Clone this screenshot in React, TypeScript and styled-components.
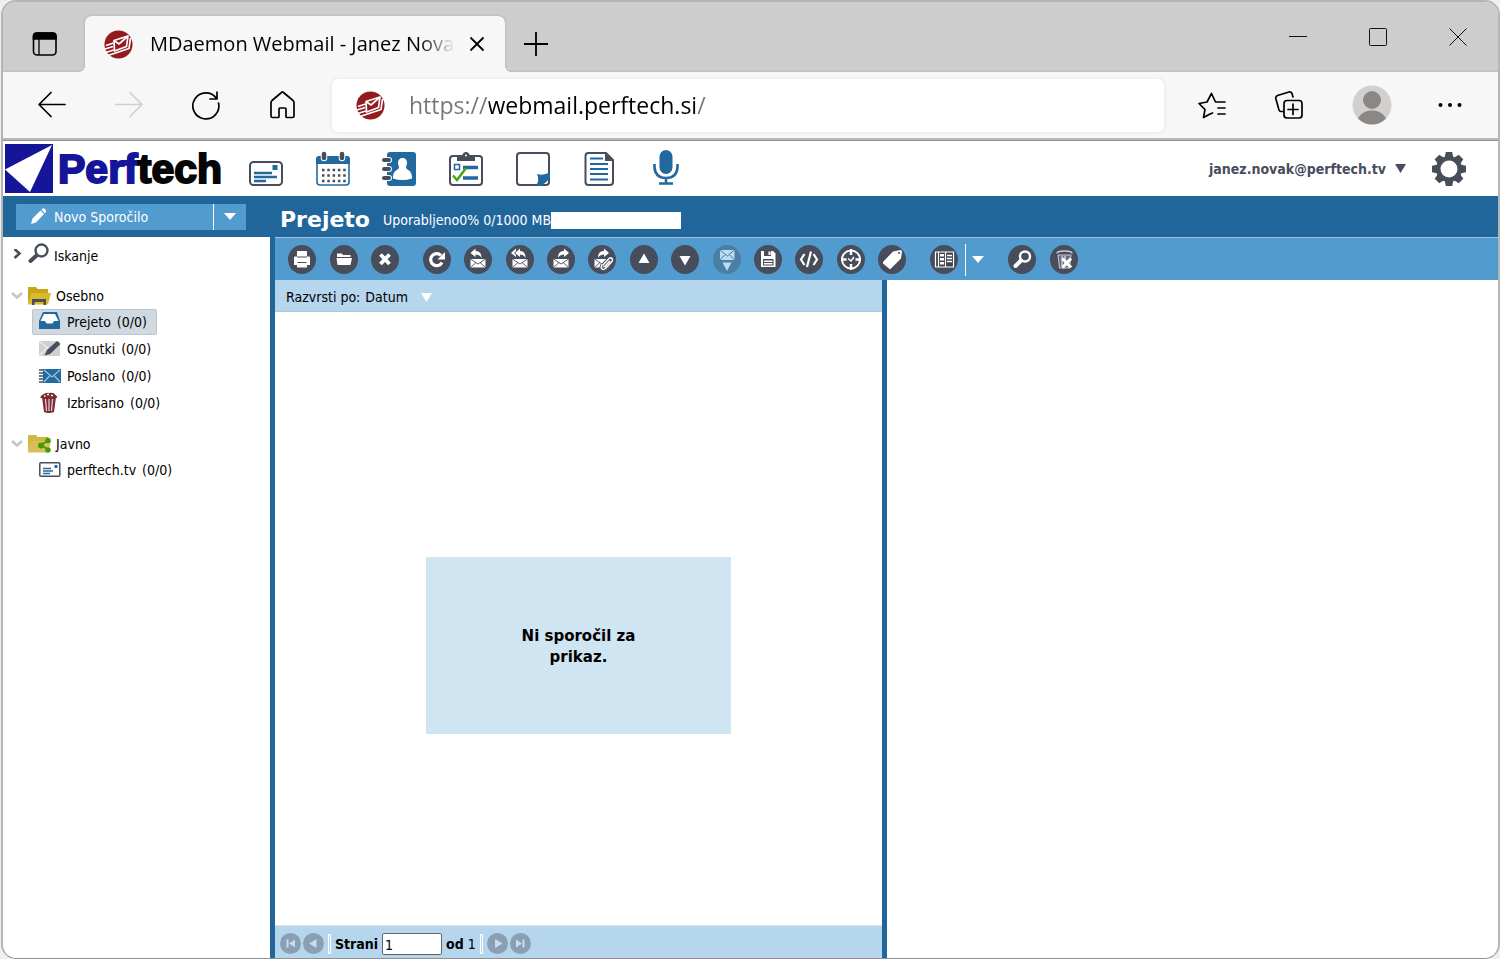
import React from 'react';
import styled, { createGlobalStyle } from 'styled-components';

const c = {
  band: '#21669b',
  bar: '#519bcf',
  pale: '#b6d6ed',
  empty: '#d0e5f2',
  slate: '#474d5b',
  chrome: '#cdcdcd',
  panel: '#f7f7f7',
  edge: '#b5b5b5',
};
const ui = `'DejaVu Sans Condensed', 'DejaVu Sans', sans-serif`;
const chromeFont = `'Open Sans', 'Noto Sans', sans-serif`;

const GlobalStyle = createGlobalStyle`
  *, *::before, *::after { box-sizing: border-box; }
  body { margin: 0; background: #efefef; }
  button, input { font: inherit; color: inherit; }
  button { border: 0; padding: 0; background: none; cursor: pointer; }
  a { color: inherit; text-decoration: none; }
  svg { display: block; flex: none; }
`;

const Window = styled.div`
  display: flex;
  flex-direction: column;
  min-height: 100vh;
  margin-left: 1px;
  border: 2px solid ${c.edge};
  border-bottom: 1px solid #909090;
  border-radius: 15px;
  overflow: hidden;
  background: #fff;
  font: 14px/18px ${ui};
  color: #000;
`;

/* Browser frame */
const TabStrip = styled.div`
  display: flex;
  height: 70px;
  background: ${c.chrome};
  padding: 14px 0 0 29px;
  align-items: stretch;
  box-shadow: inset 0 -2px 2px -1px #bbb;
`;
const PlainButton = styled.button`
  display: flex;
  align-items: center;
  justify-content: center;
  flex: none;
`;
const Tab = styled.div`
  position: relative;
  display: flex;
  align-items: center;
  width: 420px;
  margin: 0 19px 0 27px;
  padding: 0 20px 0 19px;
  background: ${c.panel};
  border-radius: 7px 7px 0 0;
  box-shadow: 0 0 3px #aaa;
  clip-path: inset(-4px -8px 0 -8px);
  &::before,
  &::after {
    content: '';
    position: absolute;
    bottom: 0;
    width: 6px;
    height: 6px;
  }
  &::before {
    left: -6px;
    background: radial-gradient(circle at 0 0, transparent 6px, ${c.panel} 6px);
  }
  &::after {
    right: -6px;
    background: radial-gradient(circle at 100% 0, transparent 6px, ${c.panel} 6px);
  }
`;
const TabTitle = styled.span`
  flex: 1;
  margin: 0 14px 0 17px;
  overflow: hidden;
  white-space: nowrap;
  font: 20px/28px ${chromeFont};
  mask-image: linear-gradient(to right, #000 calc(100% - 36px), transparent);
`;
const WindowButtons = styled.div`
  display: flex;
  gap: 60px;
  margin: 0 30px 14px auto;
`;
const NavBar = styled.div`
  display: flex;
  align-items: center;
  height: 68px;
  padding: 0 36px 0 34px;
  background: ${c.panel};
  border-bottom: 2px solid #b9b9b9;
  box-shadow: 0 1px 0 #909090;
  margin-bottom: 1px;
`;
const NavButtons = styled.div`
  display: flex;
  gap: 46px;
`;
const Address = styled.label`
  display: flex;
  align-items: center;
  flex: 1;
  height: 53px;
  margin: 0 34px 0 33px;
  padding: 0 24px;
  background: #fff;
  border-radius: 6px;
  box-shadow: 0 0 4px #e4e4e4;
`;
const AddressInput = styled.input`
  flex: 1;
  min-width: 0;
  margin-left: 24px;
  padding: 0;
  border: 0;
  outline: 0;
  font: 23px/32px ${chromeFont};
  color: transparent;
  background: linear-gradient(to right, #777 80px, #000 80px, #000 287px, #777 287px);
  background-clip: text;
  -webkit-background-clip: text;
`;
const NavRight = styled.div`
  display: flex;
  align-items: center;
  gap: 46px;
`;

/* Webmail header */
const Header = styled.header`
  display: flex;
  align-items: center;
  height: 55px;
  padding: 0 32px 0 2px;
`;
const Logo = styled.a`
  display: flex;
  align-items: center;
  gap: 5px;
  width: 244px;
  font: bold 41px/54px 'Liberation Sans', sans-serif;
  color: #15159a;
  -webkit-text-stroke: 2px currentColor;
`;
const LogoDark = styled.span`
  color: #050505;
`;
const AppNav = styled.nav`
  display: flex;
  justify-content: space-between;
  align-items: center;
  width: 434px;
`;
const Account = styled.button`
  display: flex;
  align-items: center;
  gap: 9px;
  margin: 0 26px 0 auto;
  font: bold 14px/18px ${ui};
  color: ${c.slate};
`;
const Band = styled.div`
  display: flex;
  align-items: center;
  height: 41px;
  background: ${c.band};
  color: #fff;
`;
const Compose = styled.div`
  display: flex;
  gap: 1px;
  width: 230px;
  height: 26px;
  margin: 0 34px 0 13px;
  border-radius: 3px;
  overflow: hidden;
  background: #fff;
`;
const ComposeButton = styled.button`
  display: flex;
  align-items: center;
  flex: 1;
  gap: 7px;
  padding-left: 14px;
  background: ${c.bar};
`;
const ComposeMore = styled.button`
  display: flex;
  align-items: center;
  justify-content: center;
  width: 32px;
  background: ${c.bar};
`;
const Title = styled.h1`
  margin: 6px 13px 0 0;
  font: bold 22px/28px 'DejaVu Sans', sans-serif;
`;
const Quota = styled.div`
  display: flex;
  align-items: center;
  padding-top: 7px;
`;
const QuotaBar = styled.div`
  width: 130px;
  height: 17px;
  background: #fff;
`;

/* Body */
const Body = styled.div`
  display: flex;
  flex: 1;
`;
const Sidebar = styled.nav`
  width: 267px;
  flex: none;
`;
const SearchLink = styled.a`
  display: flex;
  align-items: center;
  gap: 4px;
  height: 38px;
  padding-left: 9px;
  margin-bottom: 8px;
`;
const Group = styled.section`
  margin-bottom: 14px;
`;
const GroupHead = styled.button`
  display: flex;
  align-items: center;
  gap: 5px;
  height: 26px;
  padding-left: 8px;
`;
const Folders = styled.ul`
  list-style: none;
  margin: 0;
  padding: 0 0 0 29px;
`;
const Folder = styled.li`
  display: flex;
  height: 27px;
`;
const FolderLink = styled.a<{ $active?: boolean }>`
  display: flex;
  align-items: center;
  gap: 6px;
  height: 26px;
  padding: 0 9px 0 6px;
  border: 1px solid ${(p) => (p.$active ? '#bcc5cd' : 'transparent')};
  border-radius: 2px;
  background: ${(p) => (p.$active ? '#d1d9e0' : 'transparent')};
`;
const Main = styled.main`
  display: flex;
  flex-direction: column;
  flex: 1;
  min-width: 0;
  border-left: 5px solid ${c.band};
`;
const Toolbar = styled.div`
  display: flex;
  align-items: center;
  gap: 24px;
  height: 43px;
  padding: 1px 13px 0;
  border-top: 1px solid #a9bfd9;
  background: ${c.bar};
`;
const Tools = styled.div<{ $width?: number }>`
  display: flex;
  align-items: center;
  justify-content: space-between;
  width: ${(p) => (p.$width ? `${p.$width}px` : 'auto')};
`;
const ToolSeparator = styled.span`
  width: 1px;
  height: 32px;
  margin: 0 6px 0 7px;
  background: #fff;
`;
const Panes = styled.div`
  display: flex;
  flex: 1;
`;
const ListPane = styled.section`
  display: flex;
  flex-direction: column;
  width: 612px;
  border-right: 5px solid ${c.band};
`;
const Preview = styled.section`
  flex: 1;
`;
const SortBar = styled.div`
  display: flex;
  align-items: center;
  gap: 5px;
  height: 32px;
  padding: 3px 11px 0;
  border-bottom: 1px solid #b3c6dc;
  background: ${c.pale};
`;
const SortButton = styled.button`
  display: flex;
  align-items: center;
  gap: 13px;
`;
const ListBody = styled.div`
  display: flex;
  align-items: center;
  justify-content: center;
  flex: 1;
  padding-top: 54px;
`;
const EmptyBox = styled.p`
  display: flex;
  align-items: center;
  justify-content: center;
  width: 305px;
  height: 177px;
  margin: 0;
  padding: 2px 80px 0;
  text-align: center;
  background: ${c.empty};
  font: bold 15px/21px 'DejaVu Sans', sans-serif;
`;
const Pager = styled.div`
  display: flex;
  align-items: center;
  gap: 4px;
  height: 33px;
  padding: 3px 5px 0;
  border-top: 1px solid #dbe6f0;
  background: ${c.pale};
`;
const PagerPair = styled.div`
  display: flex;
  gap: 2px;
`;
const PagerSeparator = styled.span`
  width: 3px;
  height: 20px;
  border: 1px solid #fff;
`;
const PageLabel = styled.label`
  display: flex;
  align-items: center;
  gap: 4px;
  font-weight: bold;
`;
const PageInput = styled.input`
  width: 60px;
  height: 22px;
  padding: 2px 2px 0;
  border: 1px solid #666;
  border-radius: 2px;
  background: #fff;
  font-weight: normal;
`;
const Count = styled.span`
  font-weight: normal;
`;

/* Drawings */
const MDaemonMark = () => (
  <svg width="29" height="29" viewBox="0 0 29 29" fill="none" aria-hidden="true">
    <circle cx="14.5" cy="14.5" r="14" fill="#931b1f" />
    <g stroke="#fff" strokeWidth="1.7" strokeLinejoin="round">
      <path d="M10 10.500 24 6 22.500 16.500 10.500 21z" />
      <path d="M10 10.500 15 14 24 6" />
      <path d="M2 15.500 9.500 13M1 19 9 16.500M1.500 22.500 10 20M4 25.500 25 18.500 26.500 8" />
    </g>
  </svg>
);
const TabActions = () => (
  <svg width="26" height="26" viewBox="0 0 26 26" fill="none" stroke="#000" strokeWidth="1.6">
    <rect x="1.500" y="2" width="22.500" height="22" rx="3.500" />
    <path d="M1.500 8V5a3 3 0 0 1 3-3H21a3 3 0 0 1 3 3v3z" fill="#000" />
    <path d="M7 8v16" strokeWidth="1.300" />
  </svg>
);
const Cross = () => (
  <svg width="16" height="16" viewBox="0 0 16 16" stroke="#000" strokeWidth="1.8">
    <path d="M1.500 1.500 14.500 14.500M14.500 1.500 1.500 14.500" />
  </svg>
);
const Plus = () => (
  <svg width="24" height="24" viewBox="0 0 24 24" stroke="#000" strokeWidth="1.8">
    <path d="M0 12h24M12 0v24" />
  </svg>
);
const WinIcon = ({ d }: { d: string }) => (
  <svg width="20" height="20" viewBox="0 0 20 20" fill="none" stroke="#111" strokeWidth="1">
    <path d={d} />
  </svg>
);
const NavIcon = ({ d, color = '#000' }: { d: string; color?: string }) => (
  <svg width="31" height="30" viewBox="0 0 31 30" fill="none" stroke={color} strokeWidth="1.700" strokeLinecap="round" strokeLinejoin="round">
    <path d={d} />
  </svg>
);
const Avatar = () => (
  <svg width="40" height="40" viewBox="0 0 40 40">
    <circle cx="20" cy="20" r="19.500" fill="#d2d0ce" />
    <circle cx="20" cy="15" r="9" fill="#8a8785" />
    <path d="M6 33.500C9 28 14 25.500 20 25.500S31 28 34 33.500A19.500 19.500 0 0 1 6 33.500z" fill="#8a8785" />
  </svg>
);
const Dots = () => (
  <svg width="24" height="6" viewBox="0 0 24 6">
    <circle cx="2.500" cy="3" r="2" />
    <circle cx="12" cy="3" r="2" />
    <circle cx="21.500" cy="3" r="2" />
  </svg>
);
const LogoMark = () => (
  <svg width="48" height="49" viewBox="0 0 48 49" aria-hidden="true">
    <path fill="#15159a" d="M0 0h48v49H0z" />
    <path fill="#fff" d="M0 25.500 47 1 25 48z" />
  </svg>
);
const Down = ({ w = 12, h = 7, color = '#fff' }: { w?: number; h?: number; color?: string }) => (
  <svg width={w} height={h} viewBox="0 0 12 7" preserveAspectRatio="none" fill={color}>
    <path d="M0 0h12L6 7z" />
  </svg>
);
const Pencil = () => (
  <svg width="17" height="17" viewBox="0 0 17 17" fill="#fff">
    <path d="M1 16 2.500 10.500 10.500 2.500 14 6 6 14.500zM11.500 1.500 13 .5Q14 0 15 1L16 2.500Q16.500 3.500 15.500 4.500L14.700 5.200z" />
  </svg>
);

const blue = '#21699f';
const dark = c.slate;
const appIcons: { name: string; art: React.ReactNode }[] = [
  { name: 'Pošta', art: (<>
    <rect x="1" y="10" width="32" height="23" rx="3.500" fill="#fff" stroke={dark} strokeWidth="2" />
    <path d="M5 21h18M5 25h23M5 29h12" stroke={blue} strokeWidth="2.400" />
    <path d="M23.500 13h5v5h-5z" fill={blue} />
  </>) },
  { name: 'Koledar', art: (<>
    <rect x="1" y="5" width="32" height="28" rx="3" fill="#fff" stroke={blue} strokeWidth="1.600" />
    <path d="M0 12V7q0-3 3-3h28q3 0 3 3v5z" fill={blue} />
    <path d="M8 2v4M26 2v4" stroke="#fff" strokeWidth="6.500" strokeLinecap="round" />
    <path d="M8 2v4M26 2v4" stroke={dark} strokeWidth="4.500" strokeLinecap="round" />
    <path d="M6 18h24M6 23.500h24M6 29h24" stroke={dark} strokeWidth="2.500" strokeDasharray="2.500 2.800" />
  </>) },
  { name: 'Stiki', art: (<>
    <rect x="5" y="0" width="29" height="34" rx="3" fill={blue} />
    <path d="M20.500 6c3 0 4.500 2 4.500 5 0 2-1 3-1 4.500C24 18 30 18 30 25v1.500q-9.500 3-19 0V25c0-7 6-7 6-9.500 0-1.500-1-2.500-1-4.500 0-3 1.500-5 4.500-5z" fill="#fff" />
    <path d="M2 8h5M2 17h5M2 26h5" stroke="#fff" strokeWidth="6" strokeLinecap="round" />
    <path d="M2 8h5M2 17h5M2 26h5" stroke={dark} strokeWidth="4" strokeLinecap="round" />
  </>) },
  { name: 'Opravila', art: (<>
    <rect x="1" y="4" width="32" height="29" rx="3" fill="#fff" stroke={dark} strokeWidth="2" />
    <path d="M8 9V4h5q1-4 4-4t4 4h5v5z" fill={dark} />
    <circle cx="17" cy="3.500" r="1" fill="#fff" />
    <rect x="5.500" y="12.500" width="5" height="5" fill="none" stroke={blue} strokeWidth="1.500" />
    <path d="M14 15.500h15M14 26h15" stroke={blue} strokeWidth="3.500" />
    <path d="M4 23.500 8 28 17 16" fill="none" stroke="#4ba614" strokeWidth="2.500" />
  </>) },
  { name: 'Opombe', art: (<>
    <rect x="1" y="1" width="32" height="32" rx="3" fill="#fff" stroke={dark} strokeWidth="2" />
    <path d="M20 33Q24 29 21 22q7 2 13-2v5q-3 6-10 9z" fill={blue} />
  </>) },
  { name: 'Dokumenti', art: (<>
    <path d="M6.500 1H24l7 7v22q0 3-3 3H6.500q-3 0-3-3V4q0-3 3-3z" fill="#fff" stroke={dark} strokeWidth="2" />
    <path d="M23 1v8h8z" fill={dark} />
    <path d="M8 6.500h13M8 12h18M8 17h18M8 22h18M8 27.500h18" stroke={blue} strokeWidth="2.200" />
  </>) },
  { name: 'Glas', art: (<>
    <rect x="10.500" y="-2" width="13" height="24" rx="6.500" fill={blue} />
    <path d="M5.500 12v3Q6 26 17 26T28.500 15V12M17 26v6M10 31.500h14" fill="none" stroke={blue} strokeWidth="2.600" />
  </>) },
];
const Gear = () => (
  <svg width="34" height="34" viewBox="-17 -17 34 34" aria-hidden="true">
    {[0, 45, 90, 135].map((a) => (
      <path key={a} transform={`rotate(${a})`} d="M-3.200-17h6.400l1 5v24l-1 5h-6.400l-1-5V-12z" fill={dark} />
    ))}
    <circle r="13" fill={dark} />
    <circle r="8.500" fill="#fff" />
  </svg>
);

const envelope = (
  <>
    <path d="M6.500 14h15v8.500h-15z" fill="#fff" />
    <path d="M6.500 14 14 19l7.500-5M6.500 22.500l5.500-5M21.500 22.500l-5.500-5" fill="none" stroke={dark} strokeWidth=".9" />
  </>
);
const tools: Record<string, React.ReactNode> = {
  Natisni: <><path d="M9 6h10v6H9zM6 12.500q0-1 1-1h14q1 0 1 1V20H6z" fill="#fff" /><path d="M9 12h10M9.500 17.500h9" stroke={dark} /><path d="M9 18h10v4.500H9z" fill="#fff" /></>,
  Odpri: <path d="M7 8.500h5l1 1.500h7.500v2H7zM6.500 13H22l-1.500 7h-13z" fill="#fff" />,
  Izbriši: <path d="m9.500 9.500 9 9.500M18.500 9.500l-9 9.500" stroke="#fff" strokeWidth="3.800" />,
  Osveži: <><path d="M19 17.500a6 6 0 1 1-1-7" fill="none" stroke="#fff" strokeWidth="3.200" /><path d="M22 7v7.500h-7.500z" fill="#fff" /></>,
  Odgovori: <>{envelope}<path d="M6.500 8 11.500 3.500V6q6 0 6 7-1.500-3.500-6-3.500V12z" fill="#fff" /></>,
  'Odgovori vsem': <>{envelope}<path d="M9 8 14 3.500V6q5.500 0 5.500 7-1.500-3.500-5.500-3.500V12zM5 8l5-4.500V6L8 8l2 2v2z" fill="#fff" /></>,
  Posreduj: <>{envelope}<path d="M22 8 17 3.500V6q-6 0-6 7 1.500-3.500 6-3.500V12z" fill="#fff" /></>,
  'Posreduj kot prilogo': <>{envelope}<path d="M21 8 16 3.500V6q-6 0-6 7 1.500-3.500 6-3.500V12z" fill="#fff" /><path d="m15 20 6-6.500q2-1.500 3 0t0 3l-6.500 7q-2 1.500-3.500.5t0-4" fill="none" stroke={dark} strokeWidth="3.500" /><path d="m15 20 6-6.500q2-1.500 3 0t0 3l-6.500 7q-2 1.500-3.500.5t0-4M16.500 22l5.500-6" fill="none" stroke="#fff" strokeWidth="1.500" /></>,
  Prejšnje: <path d="M14 8.500 19.500 18h-11z" fill="#fff" />,
  Naslednje: <path d="M14 20.500 8.500 11h11z" fill="#fff" />,
  Prenesi: <><path d="M7 5h14.500v10H7z" fill="#b9dcf2" /><path d="m7 5 7.300 6L21.500 5M7 15l5-5.500M21.500 15l-5-5.500" fill="none" stroke="#4a7ea5" /><path d="M9.500 17.500h9L14 26z" fill="#b9dcf2" /></>,
  Shrani: <><path d="M7 6h12l2.500 2.500V22H7z" fill="#fff" /><path d="M10 6h7v5h-7zM9 14h10.500v6.500H9z" fill={dark} /><path d="M14.500 6.500h2V10h-2zM10 15.500h8.500v1.500H10zM10 18h8.500v1.500H10z" fill="#fff" /></>,
  Izvorna: <path d="m9.500 9-3.500 5.500L9.500 20M18.500 9l3.500 5.500-3.500 5.500M16 6.500 12 22" fill="none" stroke="#fff" strokeWidth="2.200" />,
  Odloži: <><circle cx="14" cy="14.500" r="9" fill="none" stroke="#fff" strokeWidth="2" /><path d="M14 4v6M14 19v6M4 14.500h5.500M18.500 14.500H24" stroke="#fff" strokeWidth="2.500" /><path d="m11 13.500 3 2.500 3-4" fill="none" stroke="#fff" strokeWidth="1.500" /></>,
  Oznaka: <><path d="m5 17 10-10.500 7.500-1.500q1.500 0 1.500 2l-1 6.500L13 23.500q-1 1-2 0l-6-5z" fill="#fff" /><circle cx="21" cy="8" r="1" fill={dark} /></>,
  Pogled: <><path d="M5.500 7h18v15h-18z" fill="#3c4250" stroke="#fff" strokeWidth="1.200" /><path d="M8.500 7v15M15.500 7v15" stroke="#fff" strokeWidth="1.200" /><path d="M10 9h4v2.500h-4zM10 13h4v2.500h-4zM10 17h4v2.500h-4z" fill="#fff" /><path d="M17 10.500h5M17 13.500h5M17 16.500h5" stroke="#fff" strokeWidth="1.400" /></>,
  Išči: <><circle cx="17" cy="11.500" r="5" fill="none" stroke="#fff" strokeWidth="2.400" /><path d="M13 15.500 7.500 21" stroke="#fff" strokeWidth="4" strokeLinecap="round" /></>,
  'Izprazni koš': <><path d="M8 10h13l-1.500 13h-10z" fill="#666c78" stroke="#c9ccd2" /><path d="M7 8.500Q7 6 14.500 6t7.500 2.500M12 11v10M15 11v10" fill="none" stroke="#c9ccd2" strokeWidth="1.500" /><path d="m12.500 13.500 8.500 9M21 13.500l-8.500 9" stroke="#fff" strokeWidth="3.200" /></>,
};
const ToolButton = ({ name, dim }: { name: string; dim?: boolean }) => (
  <PlainButton aria-label={name} title={name}>
    <svg width="28" height="29" viewBox="0 0 28 29">
      <ellipse cx="14" cy="14.500" rx="14" ry="14.500" fill={dim ? '#4a7ea5' : dark} />
      {tools[name]}
    </svg>
  </PlainButton>
);

const pagerArt: Record<string, string> = {
  Prva: 'M6.500 6.500h2v8h-2zM15 6.500v8l-6-4z',
  Prejšnja: 'M13.500 6v9L6 10.500z',
  Naslednja: 'M8 6v9l7.500-4.500z',
  Zadnja: 'M12.500 6.500h2v8h-2zM6 6.500v8l6-4z',
};
const PagerButton = ({ name }: { name: string }) => (
  <PlainButton aria-label={name}>
    <svg width="21" height="21" viewBox="0 0 21 21">
      <circle cx="10.500" cy="10.500" r="10.500" fill="#8a9fb3" />
      <path d={pagerArt[name]} fill="#c3def0" />
    </svg>
  </PlainButton>
);

const Chevron = ({ open }: { open?: boolean }) => (
  <svg width="12" height="14" viewBox="0 0 12 14" fill="none" stroke={open ? '#c4c6cc' : dark} strokeWidth="2.600">
    <path d={open ? 'M1 4l5 4.500L11 4' : 'M2.500 0 7.500 4.500 2.500 9'} />
  </svg>
);
const Magnifier = () => (
  <svg width="22" height="26" viewBox="0 0 22 26" fill="none" stroke={dark}>
    <circle cx="13.500" cy="7.500" r="6" strokeWidth="2.400" />
    <path d="M8.500 12.500 2.500 18" strokeWidth="4" strokeLinecap="round" />
  </svg>
);
const FolderArt = ({ shared }: { shared?: boolean }) => (
  <svg width="23" height="20" viewBox="0 0 23 20">
    <path d="M0 1h8l1.500 2H20v4H4L0 18z" fill={shared ? '#d2b83f' : '#c9a51b'} />
    <path d="M3.500 7H23l-3 11.500H0z" fill={shared ? '#d6c05a' : '#d8ba2c'} />
    {shared ? (
      <>
        <path d="M20 6.500 13 11l7 4.500" fill="none" stroke="#459b0b" strokeWidth="2" />
        <circle cx="20" cy="6.500" r="2.700" fill="#459b0b" />
        <circle cx="13" cy="11.500" r="3" fill="#459b0b" />
        <circle cx="20" cy="16" r="2.700" fill="#459b0b" />
      </>
    ) : (
      <path d="M4 19v-6h14v6h-2.500v-3h-9v3z" fill={dark} />
    )}
  </svg>
);
const folderArt: Record<string, React.ReactNode> = {
  Prejeto: <><path d="M4 1h14l3 9v8H0v-8z" fill={blue} /><path d="M5 3h11l3.500 7H15l-1.500 2.500h-6L6 10H1.500z" fill="#fff" /></>,
  Osnutki: <><path d="M0 3h21v15H0z" fill="#cfd0d3" /><path d="m0 3 10 8L21 3M0 18l8-8" fill="none" stroke="#eceded" strokeWidth="1.300" /><path d="M5.500 17.500 8 12 18 3l3.500 3L11 16z" fill={dark} /></>,
  Poslano: <><path d="M4 4h18v14H4z" fill={blue} /><path d="m5 5 8 7 8-7M5 17l5.500-6M21 17l-5.500-6" fill="none" stroke="#9cc4df" strokeWidth="1.200" /><path d="M0 5h4M0 8h4M0 11h4M0 14h4M0 17h4" stroke={dark} strokeWidth="1.400" /></>,
  Izbrisano: <><path d="M3 5h14l-2 15q-5 2-10 0z" fill="#7a2b31" /><path d="M6.500 7 7.500 19M10 7v12M13.500 7l-1 12" stroke="#e9d6d7" strokeWidth="1.200" /><path d="M1.500 5Q1.500 3.500 4 2.500 7 0 10 1q5-1 6.500 2Q18.500 4 18 6H1.500z" fill="#7a2b31" /><path d="M5 4h1.500M8 2.500h2M12 3.500h2" stroke="#fff" strokeWidth="1.400" /></>,
  'perftech.tv': <><rect x=".8" y="3.800" width="20" height="13.500" rx="1" fill="#fff" stroke={dark} strokeWidth="1.500" /><path d="M4 9.500h8M4 12h10M4 14.500h7" stroke={blue} strokeWidth="1.600" /><path d="M15.500 6h3v3h-3z" fill={blue} /></>,
};
const FolderRow = ({ name, active }: { name: string; active?: boolean }) => (
  <Folder>
    <FolderLink href="#" $active={active} aria-current={active ? 'page' : undefined}>
      <svg width="22" height="22" viewBox="0 0 22 22">{folderArt[name]}</svg>
      <span>{name}</span>
      <span>(0/0)</span>
    </FolderLink>
  </Folder>
);

const star = 'M11 24.500 5.500 27.500 7 19.500 1 13.500 9 12 13.500 3.500 17.500 12H27M20 18h7M20 24h7M11 24.500l3.500-1.500';

export default function App() {
  return (
    <>
      <GlobalStyle />
      <Window>
        <TabStrip>
          <PlainButton aria-label="Meni zavihkov"><TabActions /></PlainButton>
          <Tab>
            <MDaemonMark />
            <TabTitle>MDaemon Webmail - Janez Novak</TabTitle>
            <PlainButton aria-label="Zapri zavihek"><Cross /></PlainButton>
          </Tab>
          <PlainButton aria-label="Nov zavihek"><Plus /></PlainButton>
          <WindowButtons>
            <PlainButton aria-label="Minimiraj"><WinIcon d="M1 9.500h18" /></PlainButton>
            <PlainButton aria-label="Maksimiraj"><WinIcon d="M2.500 1.500h15q1 0 1 1v15q0 1-1 1h-15q-1 0-1-1v-15q0-1 1-1z" /></PlainButton>
            <PlainButton aria-label="Zapri"><WinIcon d="m1.500 1.500 17 17M18.500 1.500l-17 17" /></PlainButton>
          </WindowButtons>
        </TabStrip>
        <NavBar>
          <NavButtons>
            <PlainButton aria-label="Nazaj"><NavIcon d="M28 14.500H2M14 2.500l-12 12 12 12" /></PlainButton>
            <PlainButton aria-label="Naprej"><NavIcon color="#cfcfcf" d="M2 14.500h26M16 2.500l12 12-12 12" /></PlainButton>
            <PlainButton aria-label="Osveži stran"><NavIcon d="M27.500 13A13 13 0 1 1 25.500 8.500M26 2v7h-7" /></PlainButton>
            <PlainButton aria-label="Domov"><NavIcon d="M3 12.500q0-1 1-2L13.500 2.500q1-1 2 0L25 10.500q1 1 1 2V26q0 1.500-1.500 1.500H19q-1 0-1-1V19q0-1-1-1h-5q-1 0-1 1v7.500q0 1-1 1H4.500Q3 27.500 3 26z" /></PlainButton>
          </NavButtons>
          <Address>
            <MDaemonMark />
            <AddressInput aria-label="Naslov" defaultValue="https://webmail.perftech.si/" />
          </Address>
          <NavRight>
            <PlainButton aria-label="Priljubljene"><NavIcon d={star} /></PlainButton>
            <PlainButton aria-label="Zbirke"><NavIcon d="M8 21.500H6q-1.500 0-2-1.500L.8 8.500Q.5 6.500 2.500 5.500L14 2q2-.5 3 1.500l1 3.500M12 10.500h12q3 0 3 3V25q0 3-3 3H12q-3 0-3-3V13.500q0-3 3-3zM18 14v10.500M13 19.500h10" /></PlainButton>
            <PlainButton aria-label="Profil"><Avatar /></PlainButton>
            <PlainButton aria-label="Nastavitve brskalnika"><Dots /></PlainButton>
          </NavRight>
        </NavBar>

        <Header>
          <Logo href="#">
            <LogoMark />
            <span>Perf<LogoDark>tech</LogoDark></span>
          </Logo>
          <AppNav>
            {appIcons.map((i) => (
              <a key={i.name} href="#" aria-label={i.name}>
                <svg width="34" height="34" viewBox="0 0 34 34" overflow="visible">{i.art}</svg>
              </a>
            ))}
          </AppNav>
          <Account>
            janez.novak@perftech.tv
            <Down w={11} h={9} color={dark} />
          </Account>
          <PlainButton aria-label="Nastavitve"><Gear /></PlainButton>
        </Header>

        <Band>
          <Compose>
            <ComposeButton><Pencil />Novo Sporočilo</ComposeButton>
            <ComposeMore aria-label="Več možnosti"><Down /></ComposeMore>
          </Compose>
          <Title>Prejeto</Title>
          <Quota>
            <span>Uporabljeno</span>
            <span>0% 0/1000 MB</span>
            <QuotaBar role="progressbar" aria-label="Uporabljeno" aria-valuenow={0} />
          </Quota>
        </Band>

        <Body>
          <Sidebar>
            <SearchLink href="#">
              <Chevron />
              <Magnifier />
              <span>Iskanje</span>
            </SearchLink>
            <Group>
              <GroupHead><Chevron open /><FolderArt />Osebno</GroupHead>
              <Folders>
                <FolderRow name="Prejeto" active />
                <FolderRow name="Osnutki" />
                <FolderRow name="Poslano" />
                <FolderRow name="Izbrisano" />
              </Folders>
            </Group>
            <Group>
              <GroupHead><Chevron open /><FolderArt shared />Javno</GroupHead>
              <Folders>
                <FolderRow name="perftech.tv" />
              </Folders>
            </Group>
          </Sidebar>
          <Main>
            <Toolbar>
              <Tools $width={111}>
                {['Natisni', 'Odpri', 'Izbriši'].map((n) => <ToolButton key={n} name={n} />)}
              </Tools>
              <Tools $width={483}>
                {['Osveži', 'Odgovori', 'Odgovori vsem', 'Posreduj', 'Posreduj kot prilogo', 'Prejšnje', 'Naslednje', 'Prenesi', 'Shrani', 'Izvorna', 'Odloži', 'Oznaka'].map((n) => (
                  <ToolButton key={n} name={n} dim={n === 'Prenesi'} />
                ))}
              </Tools>
              <Tools>
                <ToolButton name="Pogled" />
                <ToolSeparator />
                <PlainButton aria-label="Možnosti pogleda"><Down /></PlainButton>
              </Tools>
              <Tools $width={70}>
                <ToolButton name="Išči" />
                <ToolButton name="Izprazni koš" />
              </Tools>
            </Toolbar>
            <Panes>
              <ListPane>
                <SortBar>
                  <span>Razvrsti po:</span>
                  <SortButton>Datum<Down w={11} h={9} /></SortButton>
                </SortBar>
                <ListBody>
                  <EmptyBox>Ni sporočil za prikaz.</EmptyBox>
                </ListBody>
                <Pager>
                  <PagerPair><PagerButton name="Prva" /><PagerButton name="Prejšnja" /></PagerPair>
                  <PagerSeparator />
                  <PageLabel>Strani<PageInput defaultValue="1" /></PageLabel>
                  <PageLabel as="span">od<Count>1</Count></PageLabel>
                  <PagerSeparator />
                  <PagerPair><PagerButton name="Naslednja" /><PagerButton name="Zadnja" /></PagerPair>
                </Pager>
              </ListPane>
              <Preview aria-label="Predogled" />
            </Panes>
          </Main>
        </Body>
      </Window>
    </>
  );
}
